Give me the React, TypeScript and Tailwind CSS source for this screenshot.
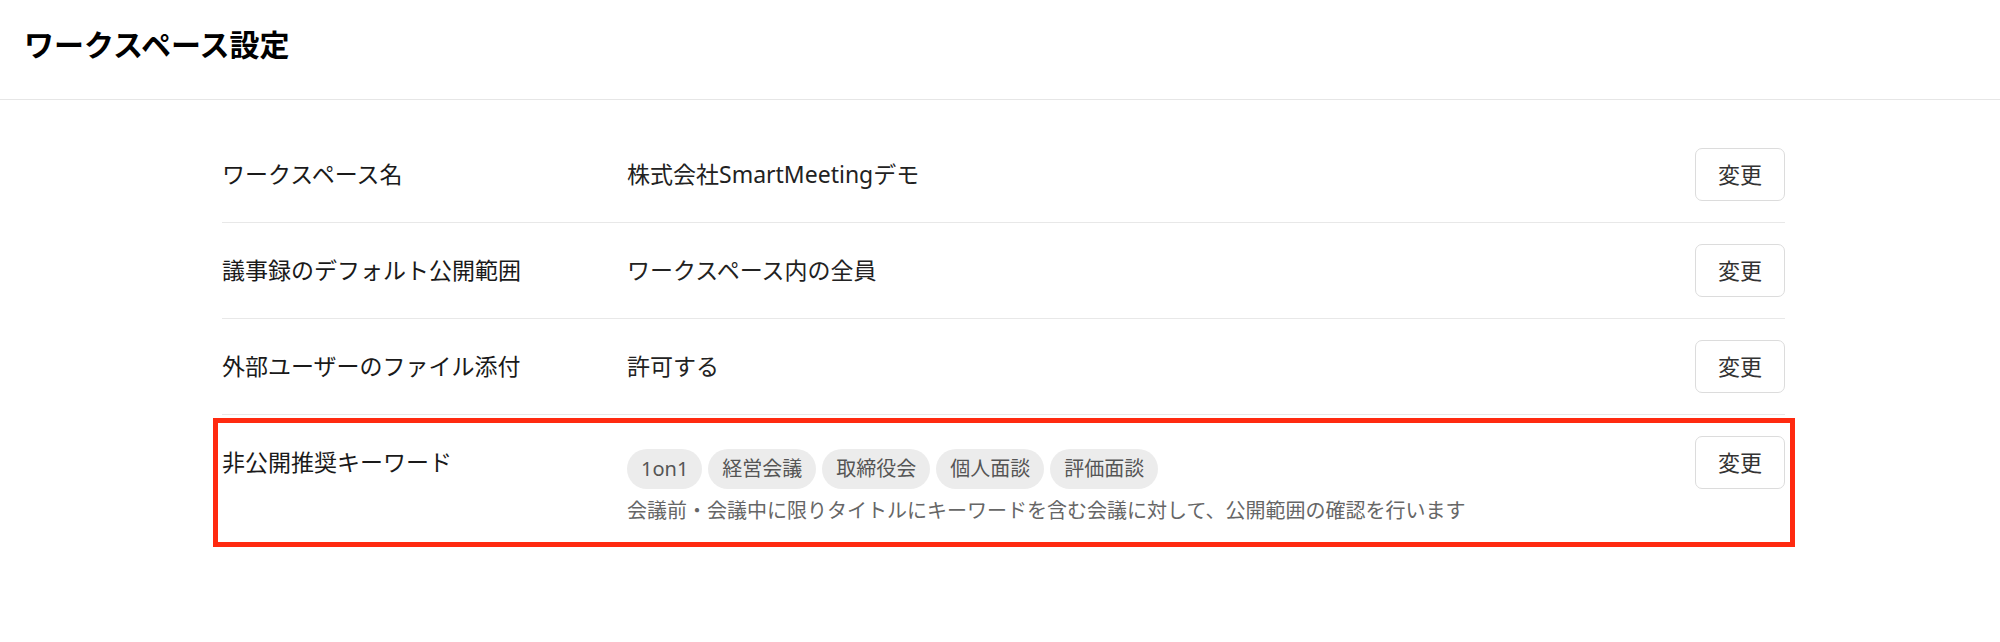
const font = {
  fontFamily: '"Noto Sans", "Noto Sans CJK JP", sans-serif',
};

const settings = [
  { label: "ワークスペース名", value: "株式会社SmartMeetingデモ" },
  { label: "議事録のデフォルト公開範囲", value: "ワークスペース内の全員" },
  { label: "外部ユーザーのファイル添付", value: "許可する" },
];

const keywords = ["1on1", "経営会議", "取締役会", "個人面談", "評価面談"];

const ChangeButton = () => (
  <button className="h-[53px] w-[90px] shrink-0 rounded-[7px] border border-[#dcdcdc] bg-white text-[22px] text-[#333]">
    変更
  </button>
);

export default function App() {
  return (
    <div className="min-h-screen bg-white text-[#1a1a1a]" style={font}>
      <header className="h-[100px] border-b border-[#e6e6e6] pl-[24px] pt-[25px]">
        <h1 className="text-[30px] font-bold leading-[40px] text-black">ワークスペース設定</h1>
      </header>

      <main className="ml-[222px] w-[1563px] pt-[27px]">
        {settings.map((s) => (
          <div key={s.label} className="flex items-center border-b border-[#e8e8e8] py-[21px]">
            <div className="w-[405px] shrink-0 text-[23px]">{s.label}</div>
            <div className="flex-1 text-[23px] text-[#222]">{s.value}</div>
            <ChangeButton />
          </div>
        ))}

        <div className="relative flex items-start pb-[15px] pt-[21px]">
          <div className="w-[405px] shrink-0 text-[23px] leading-[53px]">非公開推奨キーワード</div>
          <div className="flex-1 pt-[13px]">
            <div className="flex gap-[6px]">
              {keywords.map((k) => (
                <span
                  key={k}
                  className="h-[40px] rounded-full bg-[#ececec] px-[14px] text-[20px] leading-[40px] text-[#555]"
                >
                  {k}
                </span>
              ))}
            </div>
            <p className="mt-[7px] text-[20px] leading-[30px] text-[#666]">
              会議前・会議中に限りタイトルにキーワードを含む会議に対して、公開範囲の確認を行います
            </p>
          </div>
          <ChangeButton />
          <div className="pointer-events-none absolute top-[3px] -right-[10px] -bottom-[6px] -left-[9px] border-[5px] border-[#ff2a10]" />
        </div>
      </main>
    </div>
  );
}
